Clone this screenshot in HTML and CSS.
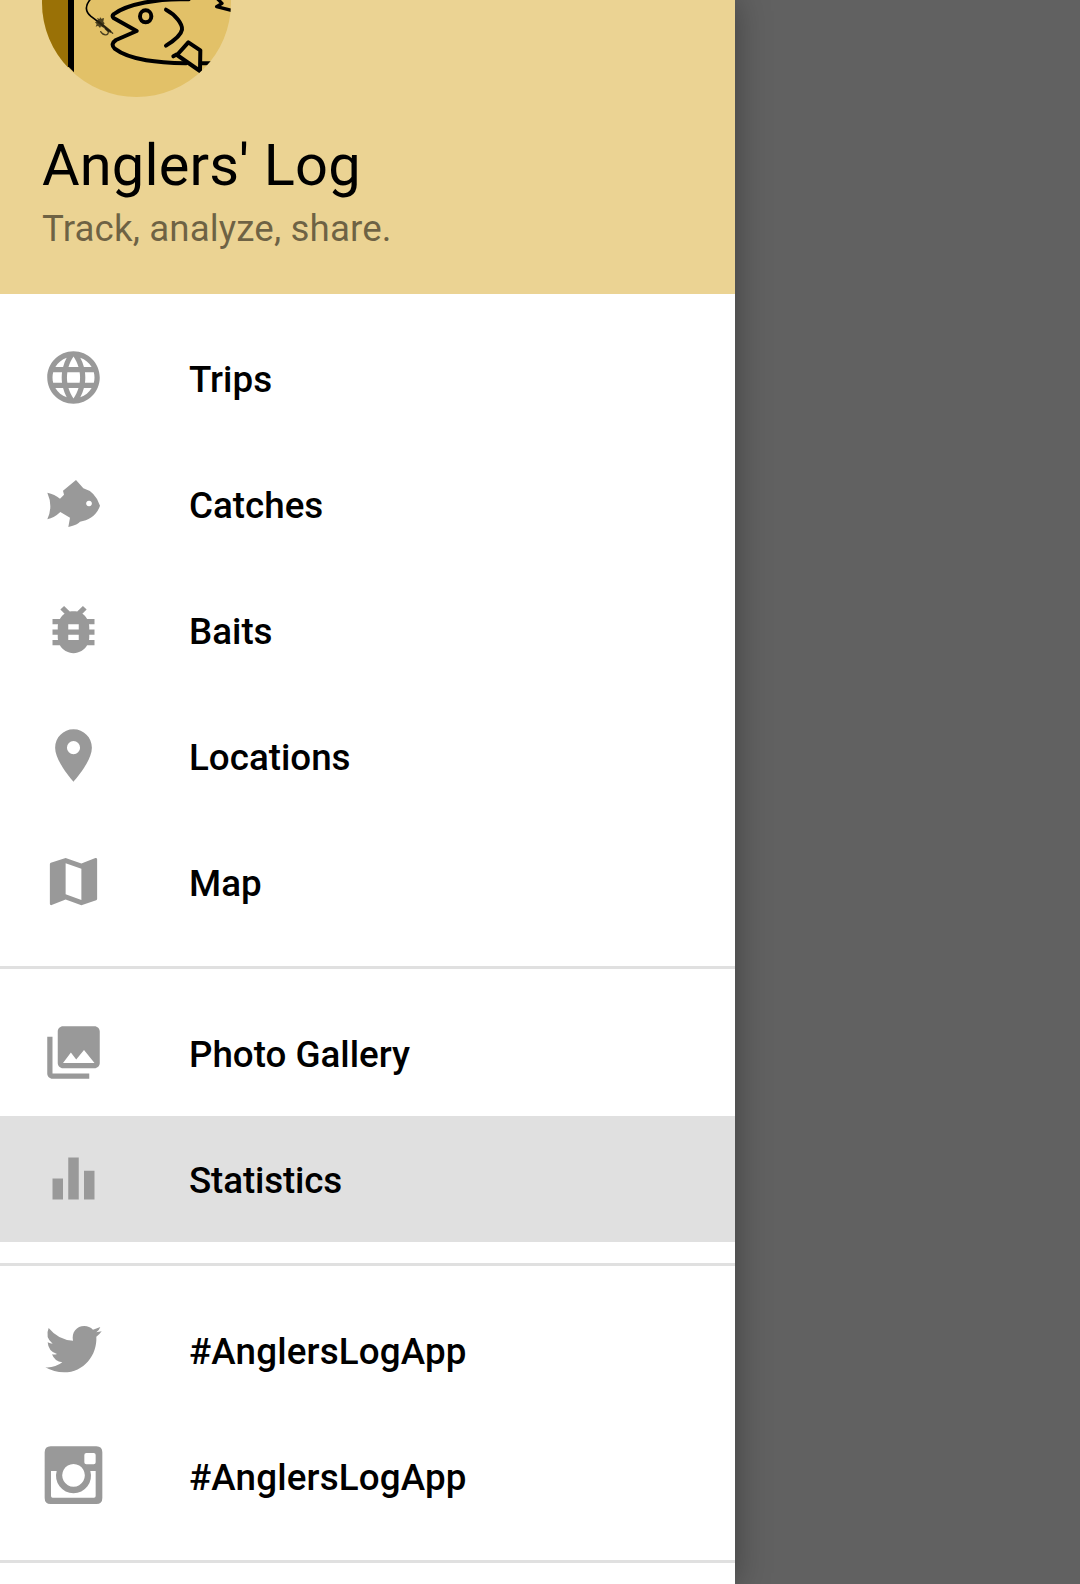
FILE: index.html
```html
<!DOCTYPE html>
<html lang="en">
<head>
<meta charset="utf-8">
<title>Anglers' Log</title>
<link rel="stylesheet" href="styles.css">
</head>
<body>
<aside class="drawer">
  <header class="header">
    <svg class="logo" viewBox="36 0 567 291">
      <clipPath id="disc"><circle cx="319.5" cy="7.5" r="283.5"/></clipPath>
      <circle cx="319.5" cy="7.5" r="283.5" fill="#e2c168"/>
      <g clip-path="url(#disc)">
        <path fill="#9a7106" d="M30 0h84v291H30z"/>
        <path d="M114 0h18v217l-18-18z"/>
        <g fill="none" stroke="#000" stroke-width="12" stroke-linecap="round" stroke-linejoin="round">
          <path d="M476-2C384-6 291 13 252 42q-9 6 0 13l68 38-62 27q-18 12-4 26c47 36 134 42 214 44"/>
          <path d="M408 29C437 44 458 73 456 89c-3 18-27 35-48 48"/>
          <path d="M475 127l36 24-1 62-69-48zM441 163l-11 6M513 190h34"/>
          <ellipse cx="347" cy="49" rx="17" ry="18"/>
          <path stroke-width="10" d="M564-2l12 12-16 10 44 11"/>
          <path stroke-width="5" d="M181-2C164 18 166 35 183 49l24 18"/>
        </g>
        <g fill="none" stroke="#171307" stroke-opacity=".75" stroke-linecap="round">
          <path stroke-width="4" d="M207 66l41 34M212 95c9 14 24 12 23 0l-9-9"/>
          <path stroke-width="8" d="M205 65l35 29"/>
        </g>
        <path fill="#2b240f" fill-opacity=".82" d="M195 67l9-6-3-7 8 3 1-6 4 5 8-2-2 11 4 5-5 6 2 7-8-4-3 5-6-7-7 3 3-8z"/>
      </g>
    </svg>
    <h1 class="title">Anglers' Log</h1>
    <p class="subtitle">Track, analyze, share.</p>
  </header>
  <nav>
    <ul class="group">
      <li class="item">
        <svg class="icon" viewBox="0 0 24 24"><path d="M11.99 2C6.47 2 2 6.48 2 12s4.47 10 9.99 10C17.52 22 22 17.52 22 12S17.52 2 11.99 2zm6.93 6h-2.95c-.32-1.25-.78-2.45-1.38-3.56 1.84.63 3.37 1.91 4.33 3.56zM12 4.04c.83 1.2 1.48 2.53 1.91 3.96h-3.82c.43-1.43 1.08-2.76 1.91-3.96zM4.26 14C4.1 13.36 4 12.69 4 12s.1-1.36.26-2h3.38c-.08.66-.14 1.32-.14 2s.06 1.34.14 2H4.26zm.82 2h2.95c.32 1.25.78 2.45 1.38 3.56-1.84-.63-3.37-1.9-4.33-3.56zm2.95-8H5.08c.96-1.66 2.49-2.93 4.33-3.56C8.81 5.55 8.35 6.75 8.03 8zM12 19.96c-.83-1.2-1.48-2.53-1.91-3.96h3.82c-.43 1.43-1.08 2.76-1.91 3.96zM14.34 14H9.66c-.09-.66-.16-1.32-.16-2s.07-1.35.16-2h4.68c.09.65.16 1.32.16 2s-.07 1.34-.16 2zm.25 5.56c.6-1.11 1.06-2.31 1.38-3.56h2.95c-.96 1.65-2.49 2.93-4.33 3.56zM16.36 14c.08-.66.14-1.32.14-2s-.06-1.34-.14-2h3.38c.16.64.26 1.31.26 2s-.1 1.36-.26 2h-3.38z"/></svg>
        <span class="label">Trips</span>
      </li>
      <li class="item">
        <svg class="icon" viewBox="36 36 189 189"><path fill-rule="evenodd" d="M52 98q22 4 38 18l12-12-3-12 39-32 22 25q36 10 50 52c-10 30-34 44-60 48q-5 8-35 16l5-28-29-17q-19 18-39 22 18-39 0-80zM177 122a8.500 8.500 0 1 0 .1 0z"/></svg>
        <span class="label">Catches</span>
      </li>
      <li class="item">
        <svg class="icon" viewBox="0 0 24 24"><path d="M20 8h-2.810c-.45-.78-1.070-1.450-1.820-1.960L17 4.410 15.590 3l-2.170 2.170C12.960 5.060 12.490 5 12 5c-.49 0-.96.060-1.410.170L8.410 3 7 4.410l1.620 1.630C7.880 6.550 7.260 7.220 6.810 8H4v2h2.090c-.05.33-.09.66-.09 1v1H4v2h2v1c0 .34.040.67.090 1H4v2h2.810c1.040 1.790 2.970 3 5.190 3s4.150-1.210 5.190-3H20v-2h-2.090c.05-.33.090-.66.090-1v-1h2v-2h-2v-1c0-.34-.04-.67-.09-1H20V8zm-6 8h-4v-2h4v2zm0-4h-4v-2h4v2z"/></svg>
        <span class="label">Baits</span>
      </li>
      <li class="item">
        <svg class="icon" viewBox="0 0 24 24"><path d="M12 2C8.130 2 5 5.130 5 9c0 5.250 7 13 7 13s7-7.750 7-13c0-3.870-3.130-7-7-7zm0 9.500a2.500 2.500 0 0 1 0-5 2.500 2.500 0 0 1 0 5z"/></svg>
        <span class="label">Locations</span>
      </li>
      <li class="item">
        <svg class="icon" viewBox="0 0 24 24"><path d="M20.500 3l-.16.030L15 5.100 9 3 3.360 4.900c-.21.070-.36.250-.36.480V20.500c0 .28.220.5.5.5l.16-.03L9 18.900l6 2.100 5.640-1.900c.21-.07.360-.25.360-.48V3.500c0-.28-.22-.5-.5-.5zM15 19l-6-2.110V5l6 2.110V19z"/></svg>
        <span class="label">Map</span>
      </li>
    </ul>
    <ul class="group">
      <li class="item">
        <svg class="icon" viewBox="0 0 24 24"><path d="M22 16V4c0-1.100-.9-2-2-2H8c-1.100 0-2 .9-2 2v12c0 1.100.9 2 2 2h12c1.100 0 2-.9 2-2zm-11-4l2.030 2.710L16 11l4 5H8l3-4zM2 6v14c0 1.100.9 2 2 2h14v-2H4V6H2z"/></svg>
        <span class="label">Photo Gallery</span>
      </li>
      <li class="item item-selected">
        <svg class="icon" viewBox="0 0 24 24"><path d="M10 20h4V4h-4v16zm-6 0h4v-8H4v8zM16 9v11h4V9h-4z"/></svg>
        <span class="label label-tight">Statistics</span>
      </li>
    </ul>
    <ul class="group">
      <li class="item">
        <svg class="icon" viewBox="36 54 189 189"><path d="M56 84q29 36 73 38c-5-25 11-44 34-44q15 0 26 11l22-8q-4 11-12 16l16-3q-6 9-16 16c3 55-37 107-97 107q-30 0-56-15 29 2 51-15-23-2-31-24 8 2 15-1-26-7-28-35 8 4 15 4-24-19-12-47z"/></svg>
        <span class="label label-tag">#AnglersLogApp</span>
      </li>
      <li class="item">
        <svg class="icon" viewBox="36 432 189 189"><path fill-rule="evenodd" d="M62 439H199q18 0 18 18V594q0 18-18 18H62q-18 0-18-18V457q0-18 18-18zM169 459q-6 0-6 6v22q0 6 6 6h22q6 0 6-6v-22q0-6-6-6zM130.500 492a34 34 0 1 0 .1 0zM63 513v75q0 5 5 5H192q5 0 5-5v-75H181a52.500 52.500 0 1 1-101 0z"/></svg>
        <span class="label label-tag">#AnglersLogApp</span>
      </li>
    </ul>
  </nav>
</aside>
</body>
</html>
```
FILE: styles.css
```css
* {
  box-sizing: border-box;
  margin: 0;
  padding: 0;
}

body {
  height: 1584px;
  overflow: hidden;
  background: #616161;
  font-family: Roboto, sans-serif;
  color: #000;
}

.drawer {
  width: 735px;
  height: 100%;
  background: #fff;
  box-shadow: 0 0 32px rgba(0, 0, 0, 0.34);
}

.header {
  height: 294px;
  padding: 0 42px;
  background: #ebd393;
}

.logo {
  display: block;
  width: 189px;
  height: 97px;
}

.title {
  margin-top: 34px;
  font-size: 57.75px;
  font-weight: 400;
  line-height: 68px;
  letter-spacing: 0.15px;
}

.subtitle {
  margin-top: 8px;
  font-size: 36.75px;
  line-height: 43px;
  letter-spacing: 0.1px;
  color: rgba(0, 0, 0, 0.54);
}

.group {
  padding: 21px 0;
  list-style: none;
  border-bottom: 3px solid #e0e0e0;
}

.item {
  display: flex;
  align-items: center;
  gap: 84px;
  height: 126px;
  padding: 0 42px 1px;
}

.item-selected {
  background: #e0e0e0;
}

.icon {
  flex: none;
  width: 63px;
  height: 63px;
  fill: #999;
}

.label {
  padding-top: 5px;
  font-size: 36.75px;
  font-weight: 500;
  line-height: 44px;
}

.label-tag {
  letter-spacing: 0.16px;
}

.label-tight {
  letter-spacing: -0.14px;
}
```
